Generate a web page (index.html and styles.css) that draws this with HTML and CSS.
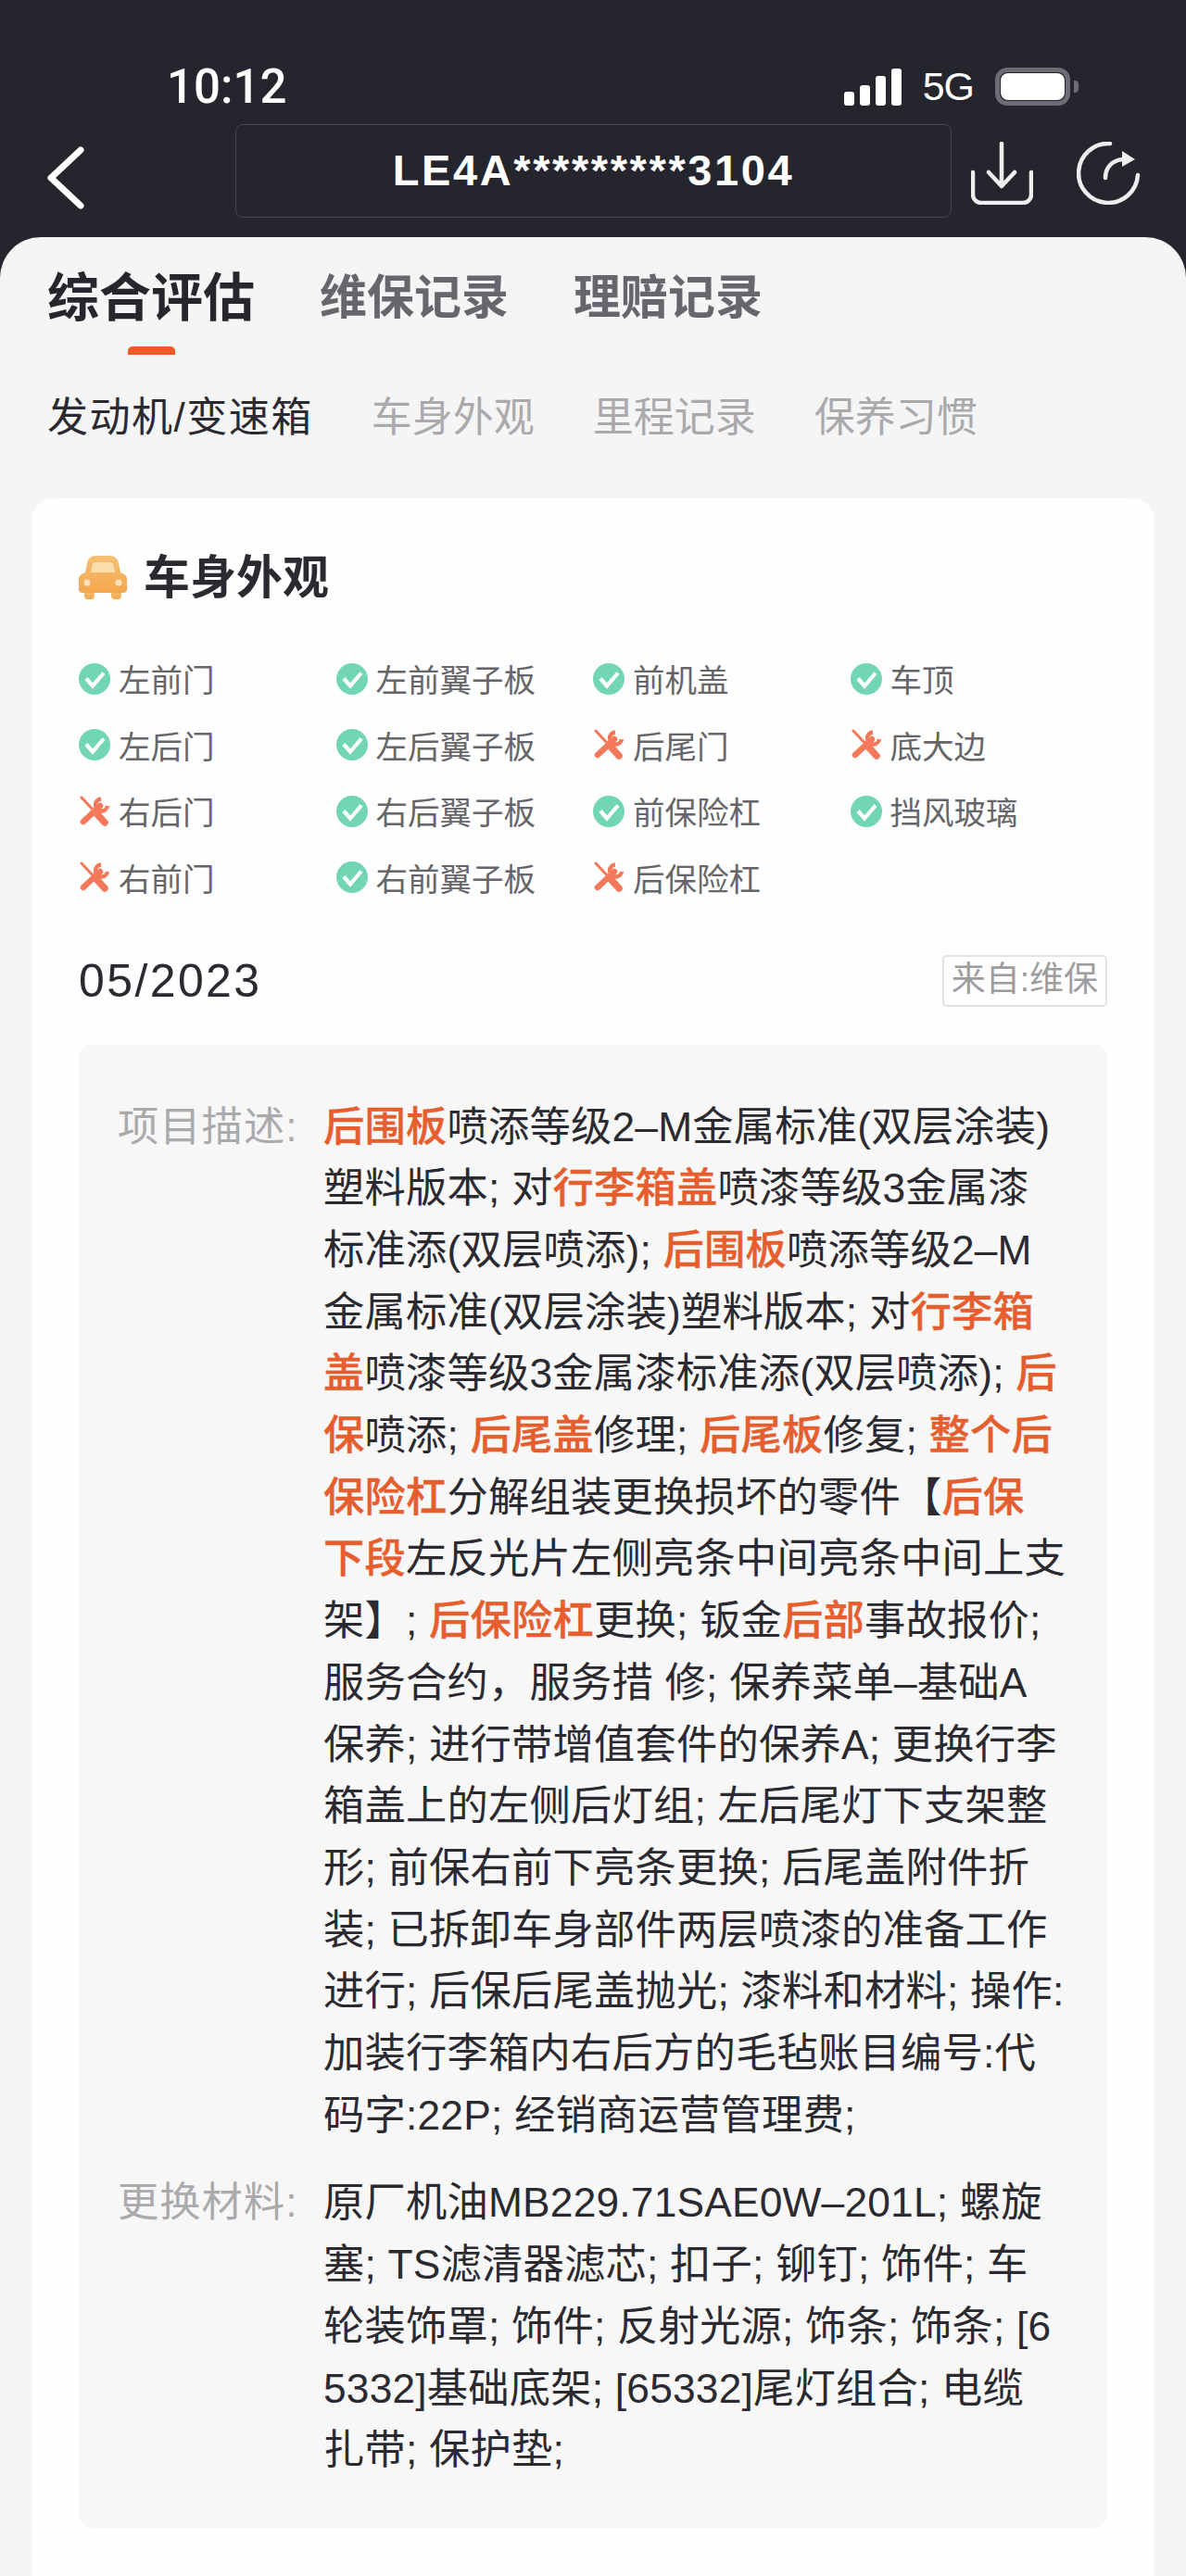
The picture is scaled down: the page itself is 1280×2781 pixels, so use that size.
FILE: index.html
```html
<!DOCTYPE html>
<html lang="zh-CN">
<head>
  <meta charset="UTF-8" />
  <meta name="viewport" content="width=device-width, initial-scale=1.0" />
  <title>车身外观</title>
  <link rel="stylesheet" href="styles.css">
</head>
<body>
  <svg class="sprites" width="0" height="0">
    <defs>
      <linearGradient id="carFill" x1="0" y1="0" x2="0" y2="1">
        <stop offset="0" stop-color="#f6bf74" />
        <stop offset="1" stop-color="#f3a84e" />
      </linearGradient>
    </defs>
    <symbol id="ok" viewBox="0 0 34 34">
      <circle cx="17" cy="17" r="17" fill="#72d6b6" />
      <path d="M8 16.500l7 8 12-14" fill="none" stroke="#fff" stroke-width="4.200" />
    </symbol>
    <symbol id="fix" viewBox="0 0 34 34">
      <path d="M3 2l14 15" fill="none" stroke="#f4785a" stroke-width="3" stroke-linecap="round" />
      <path d="M19 19l9 10" fill="none" stroke="#f4785a" stroke-width="7.500" stroke-linecap="round" />
      <path d="M5 28l18-17" fill="none" stroke="#f4785a" stroke-width="6.500" stroke-linecap="round" />
      <path d="M24 3.500A6.500 6.500 0 1 0 31 11" fill="none" stroke="#f4785a" stroke-width="4.500" />
    </symbol>
  </svg>

  <header class="topbar">
    <div class="status">
      <span class="time">10:12</span>
      <div class="status-right">
        <div class="signal"><i></i><i></i><i></i><i></i></div>
        <span class="net">5G</span>
        <div class="battery"><i></i></div>
      </div>
    </div>
    <div class="nav">
      <svg class="back" viewBox="0 0 40 68" width="40" height="68">
        <path d="M36 4L4 34l32 30" fill="none" stroke="#fff" stroke-width="7" stroke-linecap="round" stroke-linejoin="round" />
      </svg>
      <div class="vin">LE4A*********3104</div>
      <svg class="download" viewBox="0 0 67 68" width="67" height="68">
        <path d="M33 2v46M19 33l14 15 14-15M2 33v24a9 9 0 0 0 9 9h45a9 9 0 0 0 9-9V33" fill="none" stroke="#eee" stroke-width="4.500" stroke-linecap="round" stroke-linejoin="round" />
      </svg>
      <svg class="refresh" viewBox="0 0 69 68" width="69" height="68">
        <path d="M36 2A32 32 0 1 0 66 36" fill="none" stroke="#eee" stroke-width="4.500" stroke-linecap="round" />
        <path d="M31 39c0-11 7-19 19-20" fill="none" stroke="#eee" stroke-width="4.500" stroke-linecap="round" />
        <path d="M49 10l14 9-14 8z" fill="#eee" />
      </svg>
    </div>
  </header>

  <main class="sheet">
    <nav class="tabs">
      <a class="tab active">综合评估</a>
      <a class="tab">维保记录</a>
      <a class="tab">理赔记录</a>
    </nav>
    <nav class="subtabs">
      <a class="subtab active">发动机/变速箱</a>
      <a class="subtab">车身外观</a>
      <a class="subtab">里程记录</a>
      <a class="subtab">保养习惯</a>
    </nav>

    <section class="card">
      <h2 class="card-title">
        <svg viewBox="0 0 52 48" width="52" height="48">
          <path d="M6 38h11v5a4 4 0 0 1-4 4h-3a4 4 0 0 1-4-4zM35 38h11v5a4 4 0 0 1-4 4h-3a4 4 0 0 1-4-4z" fill="url(#carFill)" />
          <path d="M7 18l2-10a9 9 0 0 1 9-8h16a9 9 0 0 1 9 8l2 10 2 1a7 7 0 0 1 5 7v10a4 4 0 0 1-4 4H4a4 4 0 0 1-4-4V26a7 7 0 0 1 5-7z" fill="url(#carFill)" />
          <path d="M13 18l1.500-8a4 4 0 0 1 4-3h15a4 4 0 0 1 4 3l1.500 8z" fill="#fbdcab" />
          <circle cx="9" cy="29" r="3.500" fill="#fde3bd" />
          <circle cx="43" cy="29" r="3.500" fill="#fde3bd" />
        </svg>
        车身外观
      </h2>

      <ul class="parts">
        <li><svg><use href="#ok" /></svg>左前门</li>
        <li><svg><use href="#ok" /></svg>左前翼子板</li>
        <li><svg><use href="#ok" /></svg>前机盖</li>
        <li><svg><use href="#ok" /></svg>车顶</li>
        <li><svg><use href="#ok" /></svg>左后门</li>
        <li><svg><use href="#ok" /></svg>左后翼子板</li>
        <li><svg><use href="#fix" /></svg>后尾门</li>
        <li><svg><use href="#fix" /></svg>底大边</li>
        <li><svg><use href="#fix" /></svg>右后门</li>
        <li><svg><use href="#ok" /></svg>右后翼子板</li>
        <li><svg><use href="#ok" /></svg>前保险杠</li>
        <li><svg><use href="#ok" /></svg>挡风玻璃</li>
        <li><svg><use href="#fix" /></svg>右前门</li>
        <li><svg><use href="#ok" /></svg>右前翼子板</li>
        <li><svg><use href="#fix" /></svg>后保险杠</li>
      </ul>

      <div class="record-head">
        <span class="date">05/2023</span>
        <span class="source">来自:维保</span>
      </div>

      <div class="panel">
        <div class="label">项目描述:</div>
        <div class="value">
          <b>后围板</b>喷添等级2–M金属标准(双层涂装)<br>
          塑料版本; 对<b>行李箱盖</b>喷漆等级3金属漆<br>
          标准添(双层喷添); <b>后围板</b>喷添等级2–M<br>
          金属标准(双层涂装)塑料版本; 对<b>行李箱</b><br>
          <b>盖</b>喷漆等级3金属漆标准添(双层喷添); <b>后</b><br>
          <b>保</b>喷添; <b>后尾盖</b>修理; <b>后尾板</b>修复; <b>整个后</b><br>
          <b>保险杠</b>分解组装更换损坏的零件【<b>后保</b><br>
          <b>下段</b>左反光片左侧亮条中间亮条中间上支<br>
          架】; <b>后保险杠</b>更换; 钣金<b>后部</b>事故报价;<br>
          服务合约，服务措 修; 保养菜单–基础A<br>
          保养; 进行带增值套件的保养A; 更换行李<br>
          箱盖上的左侧后灯组; 左后尾灯下支架整<br>
          形; 前保右前下亮条更换; 后尾盖附件折<br>
          装; 已拆卸车身部件两层喷漆的准备工作<br>
          进行; 后保后尾盖抛光; 漆料和材料; 操作:<br>
          加装行李箱内右后方的毛毡账目编号:代<br>
          码字:22P; 经销商运营管理费;
        </div>
        <div class="label">更换材料:</div>
        <div class="value">
          原厂机油MB229.71SAE0W–201L; 螺旋<br>
          塞; TS滤清器滤芯; 扣子; 铆钉; 饰件; 车<br>
          轮装饰罩; 饰件; 反射光源; 饰条; 饰条; [6<br>
          5332]基础底架; [65332]尾灯组合; 电缆<br>
          扎带; 保护垫;
        </div>
      </div>
    </section>
  </main>
</body>
</html>
```

FILE: styles.css
```css
* {
  box-sizing: border-box;
}
body {
  margin: 0;
  background-color: #25252e;
  font-family: "Liberation Sans", "Noto Sans CJK SC", sans-serif;
  color: #2a2a30;
}
.sprites {
  position: absolute;
}

/* top bar */
.topbar {
  height: 292px;
  padding-top: 73px;
  background-color: #25252e;
  color: #fff;
}
.status {
  display: flex;
  justify-content: space-between;
  align-items: center;
  height: 41px;
  padding: 0 125px 0 180px;
}
.time {
  font-family: Roboto, "Liberation Sans", sans-serif;
  font-size: 51px;
  font-weight: 500;
  line-height: 41px;
}
.status-right {
  display: flex;
  align-items: center;
}
.signal {
  display: flex;
  align-items: flex-end;
  gap: 6px;
  height: 40px;
}
.signal i {
  display: block;
  width: 11px;
  border-radius: 3px;
  background-color: #fff;
}
.signal i:nth-child(1) { height: 15px; }
.signal i:nth-child(2) { height: 22px; }
.signal i:nth-child(3) { height: 32px; }
.signal i:nth-child(4) { height: 40px; }
.net {
  margin-left: 23px;
  font-size: 43px;
  line-height: 41px;
  letter-spacing: -1px;
}
.battery {
  position: relative;
  width: 81px;
  height: 41px;
  margin-left: 23px;
  padding: 1px;
  border: 5px solid #6d6e75;
  border-radius: 13px;
}
.battery::after {
  content: "";
  position: absolute;
  top: 9px;
  right: -14px;
  width: 5px;
  height: 13px;
  border-radius: 0 4px 4px 0;
  background-color: #6d6e75;
}
.battery i {
  display: block;
  width: 100%;
  height: 100%;
  border-radius: 8px;
  background-color: #fff;
}
.nav {
  display: flex;
  align-items: center;
  height: 101px;
  margin-top: 20px;
  padding-left: 51px;
}
.back {
  margin-top: 15px;
}
.vin {
  width: 773px;
  height: 101px;
  margin-left: 163px;
  border: 1.5px solid #44454f;
  border-radius: 8px;
  font-size: 47px;
  font-weight: bold;
  line-height: 98px;
  letter-spacing: 2.600px;
  text-align: center;
}
.download {
  margin: 5px 0 0 21px;
}
.refresh {
  margin: 5px 0 0 47px;
}

/* sheet */
.sheet {
  margin-top: -36px;
  padding: 0 34px;
  height: 2525px;
  border-radius: 44px 44px 0 0;
  background-color: #f5f5f5;
}
.tabs {
  display: flex;
  gap: 70px;
  height: 131px;
  padding: 32px 0 0 17px;
}
.tab {
  position: relative;
  font-size: 51px;
  font-weight: bold;
  line-height: 68px;
  height: 68px;
  color: #66666d;
}
.tab.active {
  font-size: 56px;
  color: #26262c;
}
.tab.active::after {
  content: "";
  position: absolute;
  left: 87px;
  top: 86px;
  width: 51px;
  height: 9px;
  border-radius: 5px 5px 0 0;
  background-color: #f05a28;
}
.subtabs {
  display: flex;
  gap: 63px;
  height: 151px;
  padding: 34px 0 0 17px;
}
.subtab {
  font-size: 44px;
  line-height: 60px;
  height: 60px;
  color: #aaaaad;
}
.subtab.active {
  letter-spacing: 1.500px;
  color: #2a2a30;
}

/* card */
.card {
  padding: 61px 51px 52px;
  border-radius: 24px 24px 0 0;
  background-color: #fefefe;
}
.card-title {
  display: flex;
  align-items: center;
  gap: 18px;
  height: 50px;
  margin: 0 0 48px;
  font-size: 50px;
  line-height: 50px;
}
.parts {
  display: grid;
  grid-template-columns: repeat(4, 277.5px);
  grid-auto-rows: 71.500px;
  margin: 0;
  padding: 0;
  list-style: none;
}
.parts li {
  display: flex;
  align-items: center;
  gap: 9px;
  margin-top: -1px;
  font-size: 34.500px;
  color: #66666a;
}
.parts svg {
  flex: none;
  width: 34px;
  height: 34px;
  margin-top: 1px;
}
.record-head {
  display: flex;
  justify-content: space-between;
  align-items: center;
  height: 56px;
  margin-top: 48px;
}
.date {
  font-size: 50px;
  letter-spacing: 2.400px;
}
.source {
  height: 56px;
  padding: 0 8px;
  border: 2px solid #e2e2e2;
  border-radius: 5px;
  font-size: 37px;
  line-height: 50px;
  color: #9d9da0;
}
.panel {
  display: grid;
  grid-template-columns: 222px 1fr;
  row-gap: 28px;
  margin-top: 41px;
  padding: 55.500px 0 50px 42px;
  border-radius: 14px;
  background-color: #f7f7f8;
}
.label,
.value {
  font-size: 44.300px;
  line-height: 66.700px;
  letter-spacing: 0.200px;
  white-space: nowrap;
}
.label {
  letter-spacing: 1px;
  color: #aaaaad;
}
.value b {
  font-weight: 500;
  color: #e65e2e;
  -webkit-text-stroke: 0.35px #e65e2e;
}
```
